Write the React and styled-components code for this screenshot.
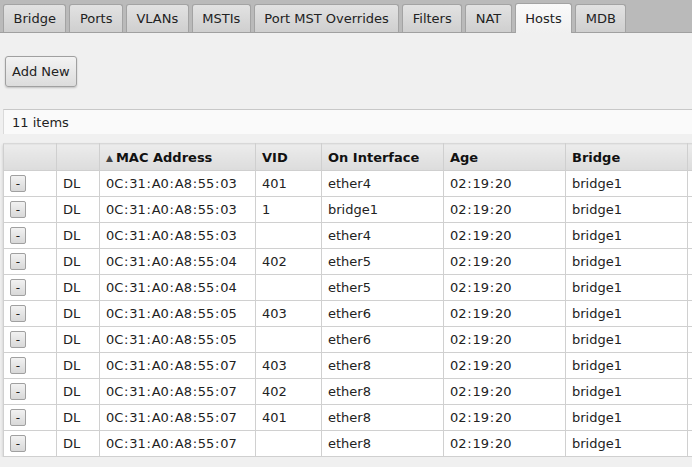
import React from "react";
import styled, { createGlobalStyle } from "styled-components";

const GlobalStyle = createGlobalStyle`
  html, body {
    margin: 0;
    padding: 0;
    background: #f0f0f0;
    overflow: hidden;
    font-family: "DejaVu Sans", Verdana, sans-serif;
    font-size: 13px;
    color: #222;
  }
`;

const TabBar = styled.div`
  display: flex;
  align-items: flex-end;
  gap: 3px;
  height: 33px;
  padding-left: 3px;
  background: #bababa;
  border-bottom: 1px solid #a0a0a0;
  box-sizing: border-box;
`;

const Tab = styled.div`
  height: ${(p) => (p.$active ? "30px" : "28px")};
  padding: 0 9.5px;
  display: flex;
  align-items: center;
  box-sizing: border-box;
  border: 1px solid #a3a3a3;
  border-bottom: none;
  border-radius: 3px 3px 0 0;
  margin-bottom: ${(p) => (p.$active ? "-1px" : "0")};
  background: ${(p) =>
    p.$active ? "linear-gradient(#fafafa, #f0f0f0)" : "linear-gradient(#e2e2e2, #cfcfcf)"};
  color: #222;
  white-space: nowrap;
`;

const Toolbar = styled.div`
  padding: 23px 5px 22px;
`;

const Button = styled.button`
  height: 31px;
  padding: 0 6px;
  font: inherit;
  color: #222;
  border: 1px solid #a0a0a0;
  border-radius: 3px;
  background: linear-gradient(#f3f3f3, #dcdcdc);
  box-shadow: 0 1px 2px rgba(0, 0, 0, 0.2);
`;

const ItemsBar = styled.div`
  margin-left: 3px;
  height: 24px;
  display: flex;
  align-items: center;
  padding-left: 8px;
  background: #fafafa;
  border-top: 1px solid #c8c8c8;
  border-left: 1px solid #dadada;
`;

const TableWrap = styled.div`
  margin: 9px 0 0 3px;
  overflow: hidden;
  box-shadow: 0 2px 3px rgba(0, 0, 0, 0.18);
`;

const Table = styled.table`
  border-collapse: collapse;
  table-layout: fixed;
  width: 760px;
  background: #fff;
`;

const Th = styled.th`
  height: 26px;
  padding: 0 6px;
  text-align: left;
  font-weight: bold;
  color: #111;
  background: linear-gradient(#ececec, #dcdcdc);
  border: 1px solid #cfcfcf;
  border-top-color: #d8d8d8;
  white-space: nowrap;
`;

const Td = styled.td`
  height: 25px;
  padding: 0 6px;
  border: 1px solid #d0d0d0;
  white-space: nowrap;
`;

const Arrow = styled.span`
  font-size: 9px;
  color: #444;
  margin-right: 3px;
  vertical-align: 1px;
`;

const Colon = styled.span`
  margin: 0 0.75px;
`;

const MiniButton = styled.button`
  width: 16px;
  height: 17px;
  padding: 0;
  font: inherit;
  font-size: 12px;
  line-height: 14px;
  color: #222;
  border: 1px solid #a0a0a0;
  border-radius: 2px;
  background: linear-gradient(#f2f2f2, #d8d8d8);
`;

const tabs = [
  "Bridge",
  "Ports",
  "VLANs",
  "MSTIs",
  "Port MST Overrides",
  "Filters",
  "NAT",
  "Hosts",
  "MDB",
];

const rows = [
  ["0C:31:A0:A8:55:03", "401", "ether4"],
  ["0C:31:A0:A8:55:03", "1", "bridge1"],
  ["0C:31:A0:A8:55:03", "", "ether4"],
  ["0C:31:A0:A8:55:04", "402", "ether5"],
  ["0C:31:A0:A8:55:04", "", "ether5"],
  ["0C:31:A0:A8:55:05", "403", "ether6"],
  ["0C:31:A0:A8:55:05", "", "ether6"],
  ["0C:31:A0:A8:55:07", "403", "ether8"],
  ["0C:31:A0:A8:55:07", "402", "ether8"],
  ["0C:31:A0:A8:55:07", "401", "ether8"],
  ["0C:31:A0:A8:55:07", "", "ether8"],
];

const widths = [53, 43, 156, 66, 122, 122, 122, 76];

// Verdana's colon is wider than DejaVu's, pad it a little
const Spaced = ({ text }) =>
  text.split(":").map((part, i) => (
    <React.Fragment key={i}>
      {i > 0 && <Colon>:</Colon>}
      {part}
    </React.Fragment>
  ));

export default function App() {
  return (
    <>
      <GlobalStyle />
      <TabBar>
        {tabs.map((t) => (
          <Tab key={t} $active={t === "Hosts"}>
            {t}
          </Tab>
        ))}
      </TabBar>
      <Toolbar>
        <Button>Add New</Button>
      </Toolbar>
      <ItemsBar>11 items</ItemsBar>
      <TableWrap>
        <Table>
          <colgroup>
            {widths.map((w, i) => (
              <col key={i} style={{ width: w }} />
            ))}
          </colgroup>
          <thead>
            <tr>
              <Th />
              <Th />
              <Th>
                <Arrow>▲</Arrow>MAC Address
              </Th>
              <Th>VID</Th>
              <Th>On Interface</Th>
              <Th>Age</Th>
              <Th>Bridge</Th>
              <Th />
            </tr>
          </thead>
          <tbody>
            {rows.map((r, i) => (
              <tr key={i}>
                <Td>
                  <MiniButton>-</MiniButton>
                </Td>
                <Td>DL</Td>
                <Td>
                  <Spaced text={r[0]} />
                </Td>
                <Td>{r[1]}</Td>
                <Td>{r[2]}</Td>
                <Td>
                  <Spaced text="02:19:20" />
                </Td>
                <Td>bridge1</Td>
                <Td />
              </tr>
            ))}
          </tbody>
        </Table>
      </TableWrap>
    </>
  );
}
